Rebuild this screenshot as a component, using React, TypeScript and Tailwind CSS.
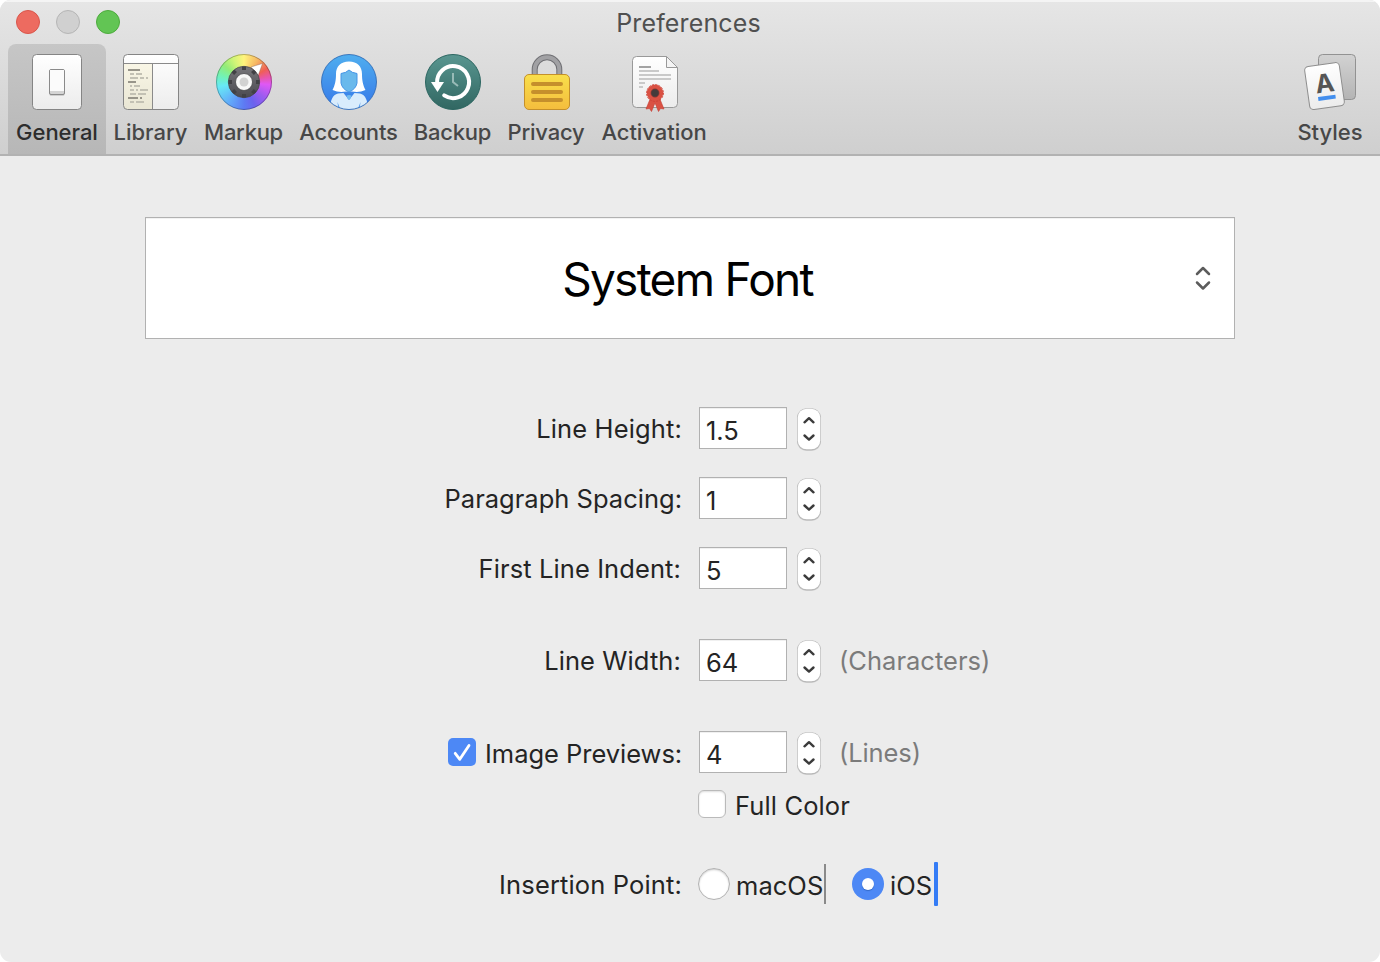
import type { ReactNode } from "react";

function GeneralIcon() {
  return (
    <svg width="60" height="60" viewBox="0 0 60 60">
      <defs>
        <linearGradient id="plate" x1="0" y1="0" x2="0" y2="1">
          <stop offset="0" stopColor="#fff" />
          <stop offset="1" stopColor="#ececec" />
        </linearGradient>
      </defs>
      <rect x="5.5" y="2.5" width="49" height="55" rx="4" fill="url(#plate)" stroke="#858585" />
      <rect x="22.5" y="18.5" width="15" height="25.3" rx="1.5" fill="#c4c4c4" />
      <rect x="22.5" y="17.5" width="15" height="25" rx="1.5" fill="#d4d4d4" stroke="#8a8a8a" />
      <path d="M23 18h14v21H23z" fill="#fbfbfb" />
    </svg>
  );
}

function LibraryIcon() {
  return (
    <svg width="60" height="60" viewBox="0 0 60 60">
      <defs>
        <linearGradient id="side" x1="0" y1="0" x2="0" y2="1">
          <stop offset="0" stopColor="#f9f6e6" />
          <stop offset="1" stopColor="#e9e6d4" />
        </linearGradient>
      </defs>
      <rect x="2.5" y="2.5" width="55" height="55" rx="4" fill="url(#plate)" />
      <path d="M3 11.5h28.5v46H6.500a4 4 0 0 1-4-4z" fill="url(#side)" />
      <path d="M2.500 11.500h55M31.500 11.500v46" stroke="#8a8a8a" fill="none" />
      <rect x="2.5" y="2.5" width="55" height="55" rx="4" fill="none" stroke="#858585" />
      <path d="M7 18h12M7 30h8M7 46h10M19 46h2" stroke="#98958a" strokeWidth="2" />
      <path
        d="M9 22h4M15 22h6M9 26h8M19 26h4M25 26h2M9 34h2M13 34h6M9 38h4M15 38h2M19 38h8M9 42h6M17 42h8M9 50h4M15 50h8"
        stroke="#c3c1b4"
        strokeWidth="2"
      />
    </svg>
  );
}

const notches = [0, 45, 90, 135, 180, 225, 270, 315];

function MarkupIcon() {
  return (
    <div className="grid size-[60px] place-items-center">
      <div className="col-start-1 row-start-1 size-14 rounded-full bg-[conic-gradient(from_0deg,#fff47c,#f6b763_32deg,#ef5f55_60deg,#e856a8_78deg,#df58f5_96deg,#a05cf0_125deg,#6c62ee_155deg,#5d7bf3_180deg,#62a9fa_215deg,#67e9f5_260deg,#72f2b5_285deg,#93ec78_310deg,#d0f577_335deg,#fff47c)]" />
      <svg className="col-start-1 row-start-1" width="60" height="60" viewBox="0 0 60 60">
        <defs>
          <linearGradient id="dial" x1="0" y1="0" x2="0" y2="1">
            <stop offset="0" stopColor="#77777b" />
            <stop offset="1" stopColor="#4b4a50" />
          </linearGradient>
        </defs>
        <circle cx="30" cy="30" r="27.5" fill="none" stroke="#000" strokeOpacity=".28" />
        <path d="M37 15 48.500 11.500 44 24z" fill="#fff" stroke="#6d5149" strokeOpacity=".5" strokeWidth=".7" />
        <circle cx="30" cy="30" r="15.7" fill="url(#dial)" stroke="#454548" strokeWidth=".7" />
        {notches.map((a) => (
          <rect key={a} x="28" y="14.5" width="4" height="3.5" fill="#414145" transform={`rotate(${a} 30 30)`} />
        ))}
        <circle cx="30" cy="30" r="8.5" fill="#f8f8f8" stroke="#47474a" strokeWidth=".8" />
        <circle cx="30" cy="30" r="4.5" fill="#d2d2d2" />
      </svg>
    </div>
  );
}

function AccountsIcon() {
  return (
    <svg width="60" height="60" viewBox="0 0 60 60">
      <defs>
        <linearGradient id="sky" x1="0" y1="0" x2="0" y2="1">
          <stop offset="0" stopColor="#4faeef" />
          <stop offset="1" stopColor="#3677e8" />
        </linearGradient>
        <clipPath id="disc">
          <circle cx="30" cy="30" r="27.5" />
        </clipPath>
      </defs>
      <circle cx="30" cy="30" r="27.5" fill="url(#sky)" />
      <g clipPath="url(#disc)">
        <path d="M11 60c0-11 2-17 8-18.500q3-.5 5.500-.5L30 48l5.500-7q2.500 0 5.500.5C47 43 49 49 49 60z" fill="#d9ecfc" />
        <path d="M18.500 50l3.500 9h-2.500zM41.500 50 38 59h2.500z" fill="#5b9fee" />
        <path d="M27.500 43.500q2.500-1 5 0l-1 3-1.500 1.500-1.500-1.500z" fill="#74bcee" />
        <path d="M30 9.500c-8.500 0-13 5-13 12.500 0 7-1 11-3.500 16 4.500 2 8.500 2.400 13.500 1.500h6c5 .9 9 .5 13.500-1.500C44 33 43 29 43 22 43 14.500 38.500 9.500 30 9.500z" fill="#fff" />
        <path d="M22 21.500q5-.5 8-3.500 3 3 8 3.500V31q-1 6-8 9-7-3-8-9z" fill="#6ab9ec" stroke="#4795e5" />
      </g>
      <circle cx="30" cy="30" r="27.5" fill="none" stroke="#2864b1" strokeOpacity=".8" />
    </svg>
  );
}

function BackupIcon() {
  return (
    <svg width="60" height="60" viewBox="0 0 60 60">
      <defs>
        <linearGradient id="teal" x1="0" y1="0" x2="0" y2="1">
          <stop offset="0" stopColor="#599690" />
          <stop offset="1" stopColor="#316762" />
        </linearGradient>
      </defs>
      <circle cx="30" cy="30" r="27.5" fill="url(#teal)" stroke="#2c6661" />
      <path d="M14.100 31A16 16 0 1 1 21.200 43.400" fill="none" stroke="#fff" strokeWidth="4" strokeLinecap="round" />
      <path d="M8 30h13l-6.500 10z" fill="#fff" />
      <path d="M30 21v9l5 4" fill="none" stroke="#98bbb7" strokeWidth="2" />
    </svg>
  );
}

function PrivacyIcon() {
  return (
    <svg width="60" height="60" viewBox="0 0 60 60">
      <defs>
        <linearGradient id="gold" x1="0" y1="0" x2="0" y2="1">
          <stop offset="0" stopColor="#f9df4b" />
          <stop offset="1" stopColor="#f4bd3d" />
        </linearGradient>
      </defs>
      <path d="M17.700 26V17.500a12.300 12.300 0 0 1 24.600 0V26" fill="none" stroke="#6f6f73" strokeWidth="6" />
      <path d="M17.700 26V17.500a12.300 12.300 0 0 1 24.600 0V26" fill="none" stroke="#a1a1a4" strokeWidth="4" />
      <rect x="7.5" y="22.5" width="45" height="35" rx="4.5" fill="url(#gold)" stroke="#c4902b" />
      <path d="M16 32h28M16 40h28M16 48h28" stroke="#c58f2c" strokeWidth="4" strokeLinecap="round" />
    </svg>
  );
}

function ActivationIcon() {
  return (
    <svg width="60" height="60" viewBox="0 0 60 60">
      <path d="M11.500 4.500h30l11 11v36a4 4 0 0 1-4 4h-37a4 4 0 0 1-4-4v-43a4 4 0 0 1 4-4z" fill="url(#plate)" stroke="#999" />
      <path d="M41.500 4.500v11h11z" fill="#f4f4f4" stroke="#999" />
      <path d="M14 15h12" stroke="#a3a3a3" strokeWidth="2" />
      <path d="M14 19h20M14 23h32M14 27h32M14 31h6M14 35h4" stroke="#c9c9c9" strokeWidth="2" />
      <path d="m25.500 46-4.500 11 3.500-.500 2 3 3.500-8.500 3.500 8.500 2-3 3.500.500-4.500-11z" fill="#da5143" stroke="#c33d32" strokeWidth=".6" />
      <circle cx="30" cy="41" r="8.2" fill="#da5143" />
      <circle cx="30" cy="41" r="8.4" fill="none" stroke="#ce4337" strokeWidth="1" strokeDasharray="2.240 1.060" />
      <circle cx="30" cy="41" r="4.2" fill="#433b3b" stroke="#a93730" strokeWidth=".6" />
    </svg>
  );
}

function StylesIcon() {
  return (
    <svg width="60" height="60" viewBox="0 0 60 60">
      <defs>
        <linearGradient id="back" x1="0" y1="0" x2="0" y2="1">
          <stop offset="0" stopColor="#d2d2d2" />
          <stop offset="1" stopColor="#b4b4b4" />
        </linearGradient>
      </defs>
      <rect x="18.5" y="2.5" width="37" height="45" rx="4" fill="url(#back)" stroke="#929292" />
      <g transform="rotate(-8 24.5 34)">
        <rect x="7" y="12.3" width="35" height="43.5" rx="4" fill="url(#plate)" stroke="#8e8e8e" />
        <text x="25" y="40.2" textAnchor="middle" fontFamily="Inter, sans-serif" fontSize="25.5" fontWeight="650" fill="#555">
          A
        </text>
        <path d="M16.500 46h17.500" stroke="#438fee" strokeWidth="3.8" />
      </g>
    </svg>
  );
}

type ToolProps = { label: string; width: string; tracking: string; nudge?: string; active?: boolean; children: ReactNode };

function Tool({ label, width, tracking, nudge = "", active = false, children }: ToolProps) {
  return (
    <button
      className={`flex h-[110px] shrink-0 flex-col items-center rounded-t-lg pt-2 ${width} ${
        active ? "bg-linear-to-b from-[#c6c6c6] to-[#b7b7b7] text-[#2d2d2d]" : "text-[#474747]"
      }`}
    >
      <span className={nudge}>{children}</span>
      <span className={`mt-1.5 text-[22px] leading-7 font-[460] whitespace-nowrap ${tracking}`}>{label}</span>
    </button>
  );
}

function Stepper() {
  return (
    <svg className="mt-px ml-[9px] shrink-0" width="26" height="45" viewBox="0 0 26 45">
      <rect x="1" y="1" width="24" height="42" rx="9.5" fill="#000" fillOpacity=".13" />
      <rect x="1" y=".2" width="24" height="42" rx="9.5" fill="#b8b8b8" />
      <rect x="1.7" y=".7" width="22.6" height="40.6" rx="9" fill="#fff" />
      <path d="m8.500 14.300 4.500-4.100 4.500 4.100M8.500 27.500l4.500 4.100 4.500-4.100" fill="none" stroke="#3b3b3b" strokeWidth="2.4" strokeLinecap="round" strokeLinejoin="round" />
    </svg>
  );
}

type RowProps = { label: ReactNode; value: string; tracking: string; unit?: string; unitTracking?: string; className: string; end?: string };

function Row({ label, value, tracking, unit, unitTracking = "", className, end = "pr-[17px]" }: RowProps) {
  return (
    <div className={`flex h-[42px] ${className}`}>
      <div className={`flex w-[699px] shrink-0 justify-end leading-[44px] whitespace-nowrap ${end} ${tracking}`}>{label}</div>
      <div className="h-[42px] w-[88px] shrink-0 border border-[#b1b1b1] bg-white pl-[6px] leading-[46px] shadow-[inset_0_1px_0_#f0f0f0]">
        {value}
      </div>
      <Stepper />
      {unit && <div className={`ml-[17px] leading-[44px] text-[#7b7b7b] ${unitTracking}`}>{unit}</div>}
    </div>
  );
}

export default function App() {
  return (
    <div className="h-[962px] w-[1380px] bg-white font-['Inter',sans-serif] text-[25.5px] text-[#242424]">
      <div className="flex h-full flex-col overflow-hidden rounded-[11px] bg-[#ececec]">
        <header className="h-[156px] shrink-0 border-b-2 border-[#b2b2b2] bg-linear-to-b from-[#e6e6e6] to-[#cfcfcf] shadow-[inset_0_2px_0_#f4f4f4]">
          <div className="grid h-11 grid-cols-[1fr_auto_1fr] items-center">
            <div className="flex gap-4 pl-4">
              <span className="size-6 rounded-full border border-[#d9564b] bg-[#ed6b60]" />
              <span className="size-6 rounded-full border border-[#b5b5b5] bg-[#d0d0d0]" />
              <span className="size-6 rounded-full border border-[#4dab3d] bg-[#62c554]" />
            </div>
            <h1 className="h-9 pr-[3px] text-[25px] leading-[38px] font-[440] tracking-[0.15px] text-[#505050]">Preferences</h1>
          </div>
          <nav className="flex pr-[10px] pl-2">
            <Tool label="General" width="w-[98px]" tracking="tracking-[-0.03px]" active><GeneralIcon /></Tool>
            <Tool label="Library" width="w-[89px]" tracking="tracking-[0px]"><LibraryIcon /></Tool>
            <Tool label="Markup" width="w-[97px]" tracking="tracking-[-0.3px]"><MarkupIcon /></Tool>
            <Tool label="Accounts" width="w-[113px]" tracking="tracking-[-0.15px]"><AccountsIcon /></Tool>
            <Tool label="Backup" width="w-[95px]" tracking="tracking-[-0.25px]"><BackupIcon /></Tool>
            <Tool label="Privacy" width="w-[92px]" tracking="tracking-[-0.2px]" nudge="pl-0.5"><PrivacyIcon /></Tool>
            <Tool label="Activation" width="w-[124px]" tracking="tracking-[-0.05px]" nudge="pl-0.5"><ActivationIcon /></Tool>
            <div className="flex-1" />
            <Tool label="Styles" width="w-20" tracking="tracking-[0px]"><StylesIcon /></Tool>
          </nav>
        </header>

        <main className="flex flex-col">
          <div className="mt-[61px] ml-[145px] grid h-[122px] w-[1090px] grid-cols-[1fr_auto_1fr] items-center border border-[#b1b1b1] bg-white shadow-[inset_0_1px_0_#f2f2f2]">
            <div />
            <div className="pt-[3px] pr-[5px] text-[46px] font-[440] tracking-[-1.7px] text-black">System Font</div>
            <svg className="mr-[22px] justify-self-end" width="18" height="26" viewBox="0 0 18 26">
              <path d="M3 9 9 3l6 6M3 17.500l6 6 6-6" fill="none" stroke="#5c5c5c" strokeWidth="2.5" strokeLinecap="round" strokeLinejoin="round" />
            </svg>
          </div>

          <Row className="mt-[68px]" label="Line Height:" tracking="tracking-[0.14px]" value="1.5" />
          <Row className="mt-7" label="Paragraph Spacing:" tracking="tracking-[0.01px]" value="1" />
          <Row className="mt-7" label="First Line Indent:" tracking="tracking-[0.1px]" value="5" end="pr-[18px]" />
          <Row className="mt-[50px]" label="Line Width:" tracking="tracking-[0.1px]" value="64" end="pr-[18px]" unit="(Characters)" unitTracking="tracking-[0.02px]" />
          <Row
            className="mt-[50px]"
            tracking="tracking-[-0.03px]"
            value="4"
            unit="(Lines)"
            unitTracking="tracking-[-0.1px]"
            label={
              <span className="flex items-start">
                <svg className="mt-[7px] mr-[9px]" width="28" height="28" viewBox="0 0 28 28">
                  <rect width="28" height="28" rx="5" fill="#4d88f5" />
                  <path d="m7.200 15.300 4.600 6L21 7.500" fill="none" stroke="#fff" strokeWidth="2.8" strokeLinecap="round" strokeLinejoin="round" />
                </svg>
                <span className="w-[197px] leading-[46px]">Image Previews:</span>
              </span>
            }
          />

          <div className="mt-[17px] ml-[698px] flex h-7">
            <span className="size-7 rounded-[6px] border border-[#bababa] bg-white shadow-[inset_0_1px_2px_#ddd]" />
            <span className="ml-[9px] leading-[32px] tracking-[0.12px]">Full Color</span>
          </div>

          <div className="mt-11 flex h-11 items-start">
            <div className="w-[698px] pt-1.5 pr-4 text-right leading-[34px] tracking-[0.14px]">Insertion Point:</div>
            <span className="mt-1.5 size-8 rounded-full border border-[#b2b2b2] bg-white shadow-[inset_0_1px_2px_#ccc]" />
            <span className="mt-1.5 ml-1.5 w-[88px] leading-9 tracking-[0.05px]">macOS</span>
            <span className="mt-0.5 h-10 w-0.5 bg-[#8a8a8a]" />
            <span className="mt-1.5 ml-[26px] grid size-8 place-items-center rounded-full bg-[#4d88f5]">
              <span className="size-3 rounded-full bg-white shadow-[0_1px_1px_#3269c8]" />
            </span>
            <span className="mt-1.5 ml-1.5 w-11 leading-9 tracking-[0.1px]">iOS</span>
            <span className="h-11 w-1 rounded-[1px] bg-[#347cf6]" />
          </div>
        </main>
      </div>
    </div>
  );
}
